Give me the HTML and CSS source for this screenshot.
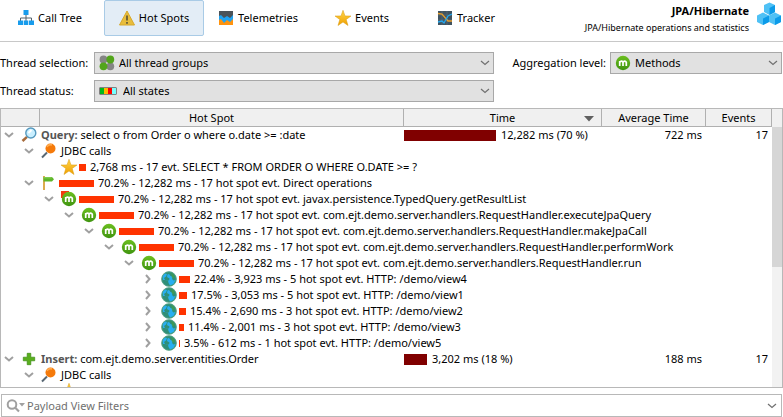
FILE: index.html
```
<!DOCTYPE html>
<html lang="en">
<head>
<meta charset="utf-8">
<title>JPA/Hibernate - Hot Spots</title>
<link rel="stylesheet" href="styles.css">
</head>
<body>
<svg class="defs" aria-hidden="true">
  <defs>
    <linearGradient id="gold" x1="0" y1="0" x2="0" y2="1"><stop offset="0" stop-color="#ffd54a"/><stop offset="1" stop-color="#f0a000"/></linearGradient>
    <linearGradient id="leaf" x1="0" y1="0" x2="0" y2="1"><stop offset="0" stop-color="#6cbf20"/><stop offset="1" stop-color="#3f9410"/></linearGradient>
  </defs>
  <symbol id="down" viewBox="0 0 10 10"><path d="M1 3 5 6.500 9 3" fill="none" stroke="#a0a0a0" stroke-width="2"/></symbol>
  <symbol id="right" viewBox="0 0 10 10"><path d="M2 1 5.500 5 2 9" fill="none" stroke="#a0a0a0" stroke-width="2"/></symbol>
  <symbol id="combo" viewBox="0 0 10 6"><path d="M1 1 5 4.500 9 1" fill="none" stroke="#707070" stroke-width="1.200"/></symbol>
  <symbol id="star" viewBox="0 0 16 16"><path d="M8 .3 10 5.900 16 6 11.200 9.500 13 15.500 8 12 3 15.500 4.800 9.500 0 6 6 5.900Z" fill="url(#gold)" stroke="#d99a10" stroke-width=".5"/></symbol>
  <symbol id="method" viewBox="0 0 16 16"><circle cx="8" cy="8" r="7.200" fill="url(#leaf)"/><path d="M4.700 11V6M4.700 7.500Q6.400 5 8 7.200V11M8 7.200Q10 5 11.300 7.200V11" fill="none" stroke="#fff" stroke-width="1.700"/></symbol>
  <symbol id="globe" viewBox="0 0 16 16"><circle cx="8" cy="8" r="7.600" fill="#2f8f78"/><path d="M1.500 5 4 2.500 6 3 5 5.500 3 7 4 9 7 9.500 7.500 12 9 14.500 12.500 13 14.500 9 12.500 9.500 11 8 12 5.500 9.500 5 8 3 6.500 3.500 6 6 8.500 7.500 8 9.500 5 9 2 9Z" fill="#28aef0"/><path d="M9 1.500 12.500 3 14 6 12.500 7.500 10.500 6 11 4Z" fill="#3f9a55"/><circle cx="8" cy="8" r="7.300" fill="none" stroke="#5fa78c" stroke-width=".8"/></symbol>
  <symbol id="pin" viewBox="0 0 16 16"><path d="M1 14.500 6 9.500" stroke="#596874" stroke-width="2"/><circle cx="9.500" cy="5.500" r="5" fill="#f57a0b"/><path d="M6 4A4 4 0 0 1 11 2" fill="none" stroke="#ffad50" stroke-width="1.500"/></symbol>
  <symbol id="glass" viewBox="0 0 16 16"><path d="M1.500 14 6 9.800" stroke="#a76b3b" stroke-width="2.500"/><circle cx="9.800" cy="6" r="5" fill="#c9efff" stroke="#5599bf" stroke-width="1.400"/><path d="M7.500 6 10.500 3" stroke="#fff" stroke-width="2"/></symbol>
  <symbol id="flag" viewBox="0 0 16 16"><path d="M3 1V15" stroke="#d9a23a" stroke-width="1.800"/><path d="M2.500 2H11L13 4.300 11 6.500H2.500Z" fill="#5db52a"/><path d="M2.500 2.800H10.700" stroke="#8ed45c"/></symbol>
  <symbol id="plus" viewBox="0 0 16 16"><path d="M6.200 2.300H9.800V6.200H13.700V9.800H9.800V13.700H6.200V9.800H2.300V6.200H6.200Z" fill="#59ae1d" stroke="#3b8b12" stroke-width=".7"/></symbol>
</svg>

<header class="toolbar">
  <nav class="tabs" aria-label="Views">
    <button class="tab"><svg class="icon" viewBox="0 0 16 16"><path d="M8 4V8M2.500 11V8H13.500V11M8 8V11" fill="none" stroke="#53636d"/><path d="M5.500 0H10.500V5H5.500ZM0 10.500H5V15H0ZM5.700 10.500H10.300V15H5.700ZM11 10.500H16V15H11Z" fill="#189cec"/></svg>Call Tree</button>
    <button class="tab active"><svg class="icon" viewBox="0 0 16 16"><path d="M8 1 15.500 15H.5Z" fill="#e8bd3c" stroke="#d7a82a"/><path d="M8 5.500V10.500M8 12V13.800" stroke="#4c4936" stroke-width="1.500"/></svg>Hot Spots</button>
    <button class="tab"><svg class="icon" viewBox="0 0 16 16"><path d="M1 1H15V15H1Z" fill="#ff930e"/><path d="M1 1H15V9L12 12 9 10 6 13 3 9 1 10Z" fill="#20a3f2"/><path d="M1 1H15V5L12 8 9 6 6 8 3 5 1 6Z" fill="#4b5359"/></svg>Telemetries</button>
    <button class="tab"><svg class="icon"><use href="#star"/></svg>Events</button>
    <button class="tab"><svg class="icon" viewBox="0 0 16 16"><path d="M1 1H15V15H1Z" fill="#405360"/><path d="M1 5H15M1 10H15M5 1V15M10 1V15" stroke="#587080" stroke-width=".6"/><path d="M1 3.500 5 4 11 11 15 11" fill="none" stroke="#eaa02c" stroke-width="1.300"/><path d="M1 12 5 11 7 13 11 6 15 4" fill="none" stroke="#24a7ee" stroke-width="1.300"/></svg>Tracker</button>
  </nav>
  <div class="heading">
    <div><h1>JPA/Hibernate</h1><p>JPA/Hibernate operations and statistics</p></div>
    <svg class="cubes" viewBox="0 0 24 24"><path d="M7 3 12.500 .5 18 3V10L12.500 13 7 10ZM0 13.500 6 10.500 12 13.500V20L6 23 0 20ZM12 13.500 18 10.500 24 13.500V20L18 23 12 20Z" fill="#4fc1f5"/><path d="M12.500 6 18 3V10L12.500 13ZM6 16.500 12 13.500V20L6 23ZM18 16.500 24 13.500V20L18 23Z" fill="#0c9be9"/></svg>
  </div>
</header>

<form class="options">
  <label for="threads">Thread selection:</label>
  <div class="picker"><svg class="icon" viewBox="0 0 16 16"><circle cx="4.500" cy="4.500" r="3.900" fill="#858585"/><circle cx="11.300" cy="11.300" r="3.900" fill="#858585"/><circle cx="11.300" cy="4.500" r="3.900" fill="#52a51b"/><circle cx="4.500" cy="11.300" r="3.900" fill="#52a51b"/></svg><select id="threads"><option>All thread groups</option></select><svg class="arrow"><use href="#combo"/></svg></div>
  <label for="level" class="right-label">Aggregation level:</label>
  <div class="picker"><svg class="icon"><use href="#method"/></svg><select id="level"><option>Methods</option></select><svg class="arrow"><use href="#combo"/></svg></div>
  <label for="status">Thread status:</label>
  <div class="picker states"><svg class="icon" viewBox="0 0 18 16"><path d="M.5 4.500H17.500V11.500H.5Z" fill="#222"/><path d="M1 5H5V11H1Z" fill="#00b81c"/><path d="M5 5H9V11H5Z" fill="#ffb800"/><path d="M9 5H13V11H9Z" fill="#f00"/><path d="M13 5H17V11H13Z" fill="#7ff"/></svg><select id="status"><option>All states</option></select><svg class="arrow"><use href="#combo"/></svg></div>
</form>

<main class="panel">
  <div class="tree">
    <table>
      <colgroup><col class="c-mark"><col><col class="c-time"><col class="c-avg"><col class="c-events"></colgroup>
      <thead><tr><th></th><th class="spot">Hot Spot</th><th class="sorted">Time<svg viewBox="0 0 10 6"><path d="M0 0H10L5 5.500Z" fill="#606060"/></svg></th><th>Average Time</th><th>Events</th></tr></thead>
      <tbody>
        <tr><td colspan="2"><div class="node"><svg class="chev"><use href="#down"/></svg><svg class="icon"><use href="#glass"/></svg><span class="name"><b>Query:</b> select o from Order o where o.date &gt;= :date</span></div></td><td><div class="time"><i class="load" style="width:92px"></i>12,282 ms (70 %)</div></td><td class="num">722 ms</td><td class="num">17</td></tr>
        <tr><td colspan="5"><div class="node l1"><svg class="chev"><use href="#down"/></svg><svg class="icon"><use href="#pin"/></svg><span class="name">JDBC calls</span></div></td></tr>
        <tr><td colspan="5"><div class="node l2"><span class="chev"></span><svg class="icon"><use href="#star"/></svg><i class="bar" style="width:7px"></i>2,768 ms - 17 evt. SELECT * FROM ORDER O WHERE O.DATE &gt;= ?</div></td></tr>
        <tr><td colspan="5"><div class="node l1"><svg class="chev"><use href="#down"/></svg><svg class="icon"><use href="#flag"/></svg><i class="bar" style="width:35px"></i>70.2% - 12,282 ms - 17 hot spot evt. Direct operations</div></td></tr>
        <tr><td colspan="5"><div class="node l2"><svg class="chev"><use href="#down"/></svg><svg class="icon" viewBox="0 0 16 16"><path d="M0 0H8V7H0Z" fill="#f33a10"/><use href="#method"/></svg><i class="bar" style="width:35px"></i>70.2% - 12,282 ms - 17 hot spot evt. javax.persistence.TypedQuery.getResultList</div></td></tr>
        <tr><td colspan="5"><div class="node l3"><svg class="chev"><use href="#down"/></svg><svg class="icon"><use href="#method"/></svg><i class="bar" style="width:35px"></i>70.2% - 12,282 ms - 17 hot spot evt. com.ejt.demo.server.handlers.RequestHandler.executeJpaQuery</div></td></tr>
        <tr><td colspan="5"><div class="node l4"><svg class="chev"><use href="#down"/></svg><svg class="icon"><use href="#method"/></svg><i class="bar" style="width:35px"></i>70.2% - 12,282 ms - 17 hot spot evt. com.ejt.demo.server.handlers.RequestHandler.makeJpaCall</div></td></tr>
        <tr><td colspan="5"><div class="node l5"><svg class="chev"><use href="#down"/></svg><svg class="icon"><use href="#method"/></svg><i class="bar" style="width:35px"></i>70.2% - 12,282 ms - 17 hot spot evt. com.ejt.demo.server.handlers.RequestHandler.performWork</div></td></tr>
        <tr><td colspan="5"><div class="node l6"><svg class="chev"><use href="#down"/></svg><svg class="icon"><use href="#method"/></svg><i class="bar" style="width:35px"></i>70.2% - 12,282 ms - 17 hot spot evt. com.ejt.demo.server.handlers.RequestHandler.run</div></td></tr>
        <tr><td colspan="5"><div class="node l7"><svg class="chev"><use href="#right"/></svg><svg class="icon"><use href="#globe"/></svg><i class="bar" style="width:11px"></i>22.4% - 3,923 ms - 5 hot spot evt. HTTP: /demo/view4</div></td></tr>
        <tr><td colspan="5"><div class="node l7"><svg class="chev"><use href="#right"/></svg><svg class="icon"><use href="#globe"/></svg><i class="bar" style="width:8px"></i>17.5% - 3,053 ms - 5 hot spot evt. HTTP: /demo/view1</div></td></tr>
        <tr><td colspan="5"><div class="node l7"><svg class="chev"><use href="#right"/></svg><svg class="icon"><use href="#globe"/></svg><i class="bar" style="width:7px"></i>15.4% - 2,690 ms - 3 hot spot evt. HTTP: /demo/view2</div></td></tr>
        <tr><td colspan="5"><div class="node l7"><svg class="chev"><use href="#right"/></svg><svg class="icon"><use href="#globe"/></svg><i class="bar" style="width:5px"></i>11.4% - 2,001 ms - 3 hot spot evt. HTTP: /demo/view3</div></td></tr>
        <tr><td colspan="5"><div class="node l7"><svg class="chev"><use href="#right"/></svg><svg class="icon"><use href="#globe"/></svg><i class="bar" style="width:1px"></i>3.5% - 612 ms - 1 hot spot evt. HTTP: /demo/view5</div></td></tr>
        <tr><td colspan="2"><div class="node"><svg class="chev"><use href="#down"/></svg><svg class="icon"><use href="#plus"/></svg><span class="name"><b>Insert:</b> com.ejt.demo.server.entities.Order</span></div></td><td><div class="time"><i class="load" style="width:23px"></i>3,202 ms (18 %)</div></td><td class="num">188 ms</td><td class="num">17</td></tr>
        <tr><td colspan="5"><div class="node l1"><svg class="chev"><use href="#down"/></svg><svg class="icon"><use href="#pin"/></svg><span class="name">JDBC calls</span></div></td></tr>
        <tr><td colspan="5"><div class="node l2"><span class="chev"></span><svg class="icon"><use href="#star"/></svg></div></td></tr>
      </tbody>
    </table>
  </div>
  <div class="scroll"><div class="corner"></div><div class="track"><div class="thumb"></div></div></div>
</main>

<div class="filter">
  <svg class="search" viewBox="0 0 20 14"><circle cx="6" cy="5.500" r="4.300" fill="none" stroke="#a0a0a0" stroke-width="2"/><path d="M9 8.500 13 12.500" stroke="#a0a0a0" stroke-width="2.200"/><path d="M13 4H19L16 7.500Z" fill="#a0a0a0"/></svg>
  <input type="text" placeholder="Payload View Filters" aria-label="Payload View Filters">
  <svg class="drop"><use href="#combo"/></svg>
</div>
</body>
</html>
```

FILE: styles.css
```
* { box-sizing: border-box; }
body {
  margin: 0;
  height: 100vh;
  display: flex;
  flex-direction: column;
  overflow: hidden;
  background: #fff;
  color: #000;
  font: 11px/16px "Noto Sans", "Open Sans", sans-serif;
}
button, input, select { font: inherit; color: inherit; }
svg { display: block; flex: none; }
.defs { position: absolute; width: 0; height: 0; }
.icon { width: 16px; height: 16px; flex: none; }

.toolbar {
  display: flex;
  justify-content: space-between;
  height: 42px;
  flex: none;
  border-bottom: 1px solid #c8c8c8;
}
.tabs { display: flex; gap: 4px; }
.tab {
  width: 100px;
  height: 36px;
  padding: 0;
  display: flex;
  align-items: center;
  justify-content: center;
  gap: 4px;
  border: 1px solid transparent;
  border-radius: 2px;
  background: none;
  white-space: nowrap;
}
.tab.active { background: #e3edf6; border-color: #a9cbe6; }
.heading { display: flex; gap: 8px; text-align: right; padding: 2px 2px 0 0; }
.heading h1 { margin: 0; font-size: 11px; line-height: 18px; }
.heading p { margin: 0; font-size: 9px; line-height: 16px; white-space: nowrap; }
.cubes { width: 24px; height: 24px; }

.options {
  display: grid;
  grid-template-columns: 94px minmax(0, 400fr) 116px minmax(0, 172fr);
  gap: 6px 0;
  align-items: center;
  padding: 10px 1px 6px 0;
  flex: none;
}
.options label { white-space: nowrap; }
.options .right-label { padding-right: 4px; text-align: right; }
.picker { position: relative; }
.picker select {
  display: block;
  width: 100%;
  height: 22px;
  padding: 0 24px;
  border: 1px solid #a8a8a8;
  border-radius: 0;
  background: #e1e1e1;
  appearance: none;
}
.picker .icon { position: absolute; left: 5px; top: 3px; pointer-events: none; }
.states .icon { width: 18px; }
.picker.states select { padding-left: 28px; }
.arrow { position: absolute; right: 4px; top: 8px; width: 10px; height: 6px; pointer-events: none; }

.panel {
  flex: 1;
  min-height: 0;
  display: flex;
  border: 1px solid #b8b8b8;
}
.tree { flex: 1; min-width: 0; overflow: hidden; }
table { width: 100%; table-layout: fixed; border-collapse: separate; border-spacing: 0; }
.c-mark { width: 39px; }
.c-time { width: 198px; }
.c-avg { width: 104px; }
.c-events { width: 66px; }
th {
  position: relative;
  height: 18px;
  padding: 0;
  font-weight: 400;
  line-height: 17px;
  background: #f0f0f0;
  border-right: 1px solid #b0b0b0;
  border-bottom: 1px solid #b0b0b0;
}
.spot { padding-right: 20px; }
.sorted svg { position: absolute; right: 7px; top: 7px; width: 10px; height: 6px; }
td { height: 16px; padding: 0; line-height: 16px; white-space: nowrap; }
.node, .time { display: flex; align-items: center; height: 16px; }
.node { padding-left: 3px; }
.l1 { padding-left: 23px; }
.l2 { padding-left: 43px; }
.l3 { padding-left: 63px; }
.l4 { padding-left: 83px; }
.l5 { padding-left: 103px; }
.l6 { padding-left: 123px; }
.l7 { padding-left: 143px; }
.chev { width: 10px; height: 10px; margin-right: 7px; flex: none; }
.name { padding-left: 4px; }
.name b { color: #555; }
.bar { height: 7px; margin: 0 4px 0 2px; background: #ff3300; flex: none; }
.load { height: 11px; margin-right: 5px; background: #800000; flex: none; }
.num { text-align: right; padding-right: 4px; }

.scroll { width: 10px; display: flex; flex-direction: column; }
.corner { height: 18px; background: #f0f0f0; }
.track { flex: 1; background: #f2f2f2; }
.thumb { height: 54%; background: #d6d6d6; }

.filter {
  display: flex;
  align-items: center;
  height: 23px;
  margin: 6px 1px 0;
  padding: 0 4px;
  flex: none;
  border: 1px solid #b8b8b8;
}
.search { width: 20px; height: 14px; }
.filter input { flex: 1; min-width: 0; border: 0; outline: 0; padding: 0 1px; background: none; }
.filter input::placeholder { color: #707070; opacity: 1; }
.drop { width: 10px; height: 6px; }
```
